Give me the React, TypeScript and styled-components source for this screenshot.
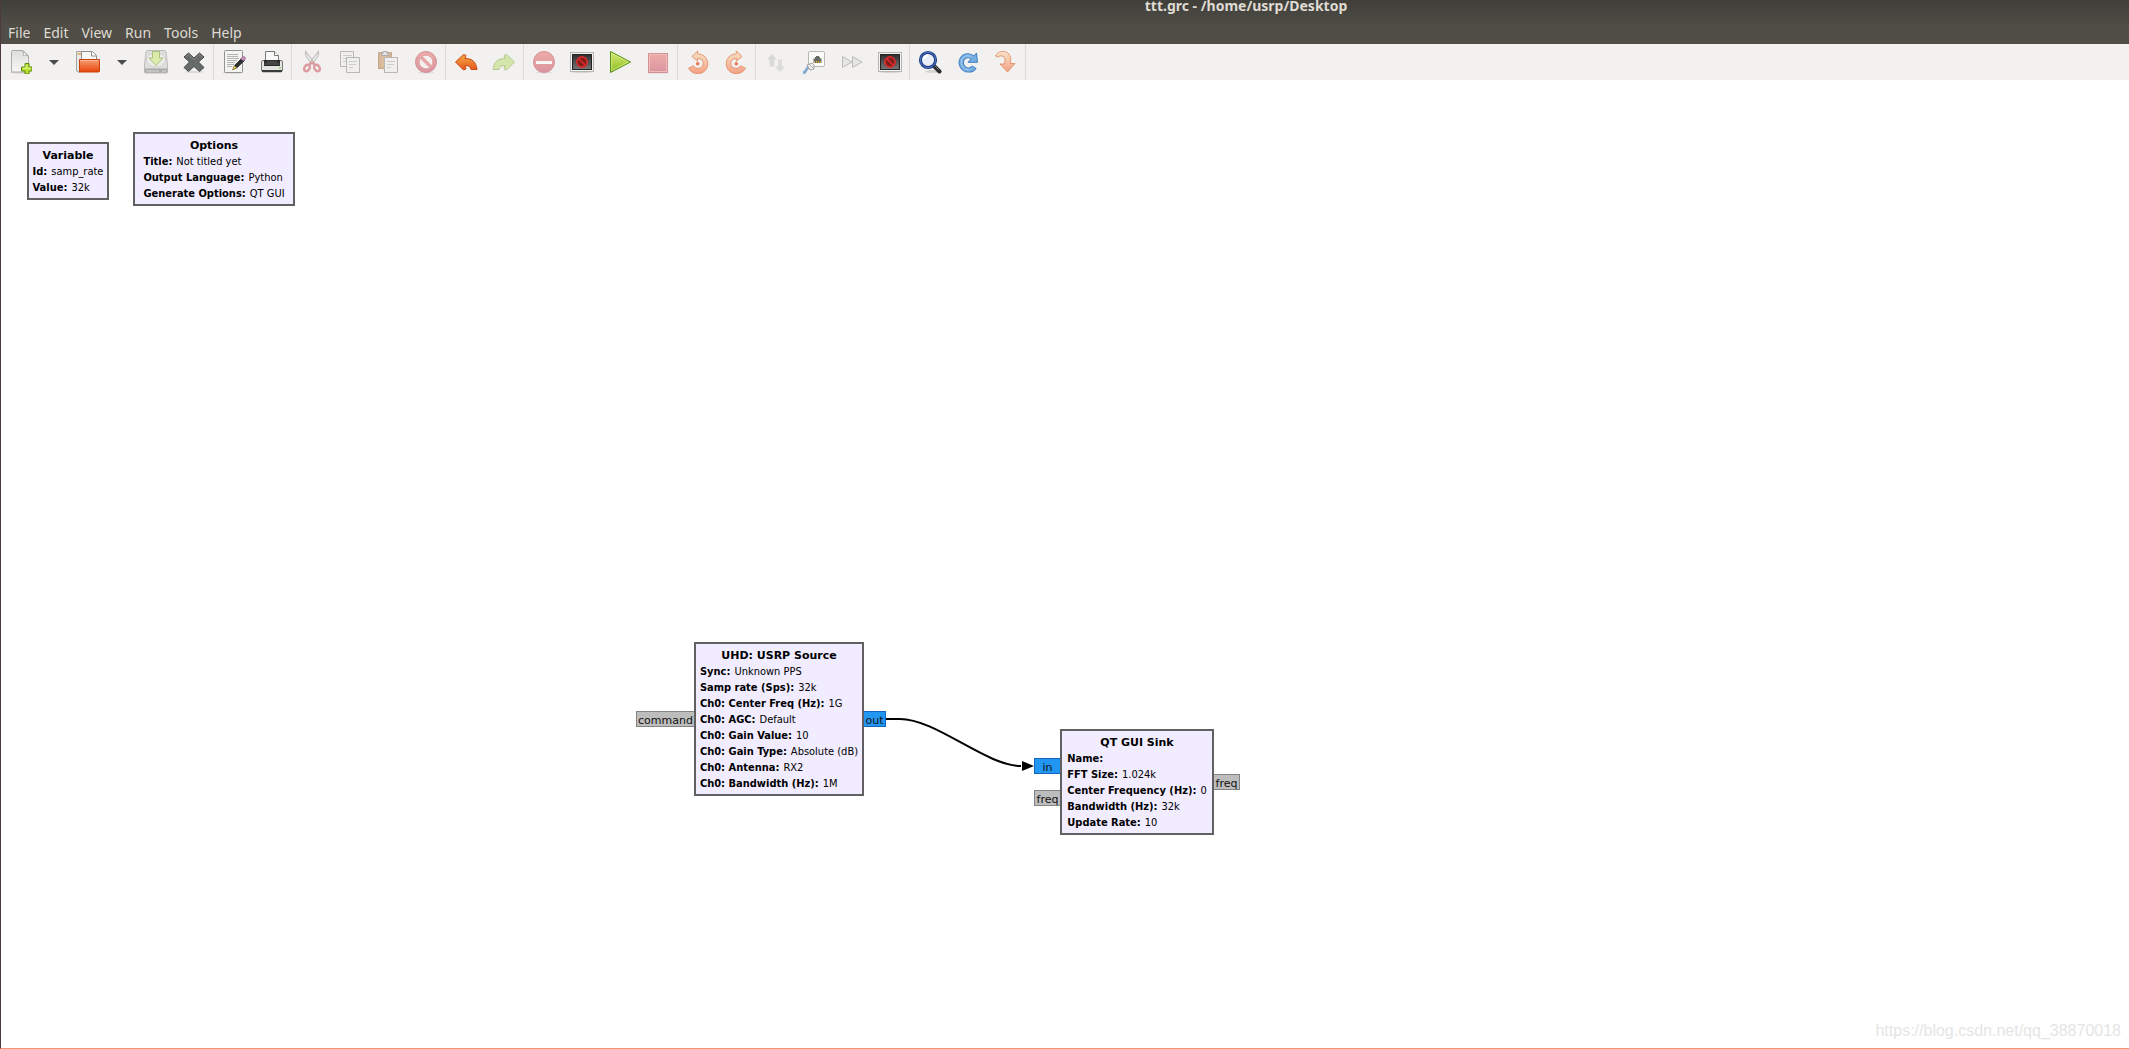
import React from "react";
import styled, { createGlobalStyle } from "styled-components";

const GlobalStyle = createGlobalStyle`
  * { box-sizing: border-box; }
  body { margin: 0; background: #ffffff; }
`;

const Window = styled.div`
  display: flex;
  flex-direction: column;
  min-height: 100vh;
  border-left: 1px solid #4b3a40;
  border-bottom: 1px solid #f7946d;
  font-family: "DejaVu Sans", sans-serif;
`;

const Header = styled.header`
  display: flex;
  flex-direction: column;
  background: linear-gradient(#3f3e39 0, #504d46 26px);
  color: #dfdbd2;
  font-family: "Noto Sans", sans-serif;
  font-size: 14px;
`;

const Title = styled.h1`
  margin: 0;
  padding-left: 362px;
  font-size: 14px;
  font-weight: 700;
  line-height: 12px;
  text-align: center;
`;

const MenuBar = styled.nav`
  display: flex;
  align-items: flex-end;
  gap: 1px;
  height: 32px;
  padding: 0 0 1px 1px;
`;

const MenuItem = styled.button`
  padding: 0 6px;
  border: 0;
  background: none;
  color: inherit;
  font: inherit;
  line-height: 20px;
`;

const Toolbar = styled.div`
  display: flex;
  height: 36px;
  background: #f2f1f0;
`;

const ToolGroup = styled.div`
  display: flex;
  border-right: 1px solid #dcdad8;
  margin-right: 1px;
`;

const ToolButton = styled.button<{ $narrow?: boolean }>`
  display: flex;
  align-items: center;
  justify-content: center;
  width: ${(p) => (p.$narrow ? 30 : 38)}px;
  padding: 0;
  border: 0;
  background: none;
`;

const Icon = styled.svg<{ $faded?: boolean }>`
  display: block;
  width: 24px;
  height: 24px;
  opacity: ${(p) => (p.$faded ? 0.5 : 1)};
`;

const Canvas = styled.main`
  position: relative;
  flex: 1;
  background: #ffffff;
`;

const Wire = styled.svg`
  position: absolute;
  left: 0;
  top: 0;
  width: 100%;
  height: 100%;
`;

const Block = styled.section<{ $x: number; $y: number; $w: number }>`
  position: absolute;
  left: ${(p) => p.$x}px;
  top: ${(p) => p.$y}px;
  width: ${(p) => p.$w}px;
  display: flex;
  flex-direction: column;
  align-items: center;
  padding: 4px 0 2px;
  border: 2px solid #616161;
  background: #f1ecff;
  color: #000000;
  line-height: 16px;
  white-space: nowrap;
`;

const BlockTitle = styled.h2`
  margin: 0;
  font-size: 11px;
  font-weight: 700;
`;

const Params = styled.dl`
  margin: 0;
  font-family: "DejaVu Sans Condensed", "DejaVu Sans", sans-serif;
  font-size: 11px;
`;

const Param = styled.div`
  display: flex;
  gap: 4px;
  dt { font-weight: 700; }
  dd { margin: 0; }
`;

const Port = styled.div<{ $x: number; $y: number; $w: number; $blue?: boolean }>`
  position: absolute;
  left: ${(p) => p.$x}px;
  top: ${(p) => p.$y}px;
  width: ${(p) => p.$w}px;
  height: 16px;
  padding-top: 2px;
  border: 1px solid ${(p) => (p.$blue ? "#1565c0" : "#848484")};
  background: ${(p) => (p.$blue ? "#2196f3" : "#bdbdbd")};
  color: #111111;
  font-size: 11px;
  line-height: 14px;
  text-align: center;
  white-space: nowrap;
`;

const Watermark = styled.a`
  position: absolute;
  right: 8px;
  bottom: 7px;
  color: #e5e5e5;
  font-family: "Liberation Sans", Arial, sans-serif;
  font-size: 16px;
  line-height: 20px;
  text-decoration: none;
`;

const Gradient = ({ id, from, to }: { id: string; from: string; to: string }) => (
  <linearGradient id={id} x1="0" y1="0" x2="0" y2="1">
    <stop offset="0" stopColor={from} />
    <stop offset="1" stopColor={to} />
  </linearGradient>
);

const art: Record<string, React.ReactNode> = {
  new: (
    <>
      <ellipse cx="12" cy="22.5" rx="10" ry="1" fill="#000" opacity=".12" />
      <path d="M3.5 1.5a1 1 0 0 1 1-1H15l5.500 5.500v15a1 1 0 0 1-1 1h-15a1 1 0 0 1-1-1z" fill="url(#g-page)" stroke="#a9aba6" />
      <path d="M14.5.8c1.5 1.7 1 3.5.7 4.7 1.8-.5 3.8-.3 5 .5z" fill="#fff" stroke="#9a9c98" strokeWidth=".7" />
      <path d="M17 13.500h4V17h3v4h-3v3h-4v-3h-3.500v-4H17z" fill="#b9e02c" stroke="#5c8a10" />
      <path d="M18.200 15v3.200H15m3.500 0h4" stroke="#e4f6a0" fill="none" />
    </>
  ),
  open: (
    <>
      <path d="M.5 3.500V21l3 1.500 3-14V1.500h-6z" fill="#e9e9e8" stroke="#a3a3a1" />
      <path d="M1.500 4h4" stroke="#e39b3a" strokeWidth="1.300" />
      <path d="M5.500 11V1.500h11l4 4V11z" fill="#f7f7f6" stroke="#8e8e8c" />
      <path d="M15.500 1.500v4.500h5" fill="#fff" stroke="#8e8e8c" />
      <path d="M3.500 9.500h20V21a1 1 0 0 1-1 1h-19z" fill="url(#g-folder)" stroke="#c9430f" />
      <path d="M4.500 10.500h18" stroke="#f9b795" />
    </>
  ),
  save: (
    <>
      <path d="M4 .5h16a2 2 0 0 1 2 1.500L23.500 15v7a1 1 0 0 1-1 1h-21a1 1 0 0 1-1-1v-7L2 2A2 2 0 0 1 4 .5z" fill="#dededc" stroke="#bcbcba" />
      <ellipse cx="12" cy="10" rx="9.500" ry="7" fill="#ececeb" stroke="#d2d2d0" />
      <path d="M.8 18.500h22.400V22a1 1 0 0 1-1 .8H1.800a1 1 0 0 1-1-.8z" fill="#aaaaa8" />
      <path d="M2 21h13M18 21h4" stroke="#dcdcda" />
      <path d="M8.500 1.500h7V8H19l-7 7.500L5 8h3.500z" fill="#dcebab" stroke="#a9c277" />
    </>
  ),
  close: (
    <>
      <ellipse cx="12" cy="22" rx="9" ry="1" fill="#000" opacity=".1" />
      <path d="M6.500 3 12 8l5.500-5L22 7l-5.500 5 5.500 5.500-4.500 4L12 16.500l-5.500 5-4.500-4L7.500 12 2 7z" fill="#666a68" stroke="#464948" strokeLinejoin="round" />
      <path d="M3.800 7 6.600 4.600 12 9.500l5.400-4.900L20.300 7" fill="none" stroke="#8a8d8b" strokeWidth=".8" />
    </>
  ),
  edit: (
    <>
      <ellipse cx="11" cy="22.500" rx="10" ry="1" fill="#000" opacity=".15" />
      <rect x="2.500" y=".5" width="18" height="22" rx="1" fill="#f3f3f2" stroke="#929490" />
      <path d="M5 4.500h11M5 6.500h11M5 8.500h12M5 10.500h10M5 12.500h8M5 14.500h7M5 16.500h5" stroke="#b4b5b2" />
      <path d="M11 19.500 13 15l7-7 2.500 2.500-7.200 7z" fill="#2f3032" stroke="#181818" strokeWidth=".7" />
      <path d="m10.500 19.800 1.600-4.200 2.700 2.500z" fill="#efd45c" stroke="#796620" strokeWidth=".5" />
      <path d="m18.700 8.500 2-1.800c1.500-1 3.500.9 2.600 2.400l-2 2z" fill="#c990bd" stroke="#86617f" strokeWidth=".6" />
    </>
  ),
  print: (
    <>
      <path d="M5.500 14V1.500h9l4 4V14z" fill="#f8f8f8" stroke="#777977" />
      <path d="M14.500 1.500v4h4" fill="#fff" stroke="#777977" />
      <rect x="1.500" y="10.500" width="21" height="11" rx="1.500" fill="#e3e3e1" stroke="#777977" />
      <rect x="4" y="10" width="16" height="6" fill="#292b2b" />
      <path d="M4.500 14h15M7 12h10" stroke="#606262" />
      <path d="M2 20h20v1.200a1 1 0 0 1-1 1H3a1 1 0 0 1-1-1z" fill="#393b3a" />
      <circle cx="20" cy="18" r=".8" fill="#60c642" />
    </>
  ),
  cut: (
    <>
      <path d="M5.500 1.500c-.5 3.500.5 5.500 6 12l2-1.500zM18.500 1.500c.5 3.500-.5 5.500-6 12l-2-1.500z" fill="#f0f0ef" stroke="#8b8d89" strokeWidth="1.100" />
      <path d="m12 12 3 3M12 12l-3 3" stroke="#c94c54" strokeWidth="2.500" />
      <ellipse cx="7" cy="18" rx="2.500" ry="3.500" transform="rotate(32 7 18)" fill="none" stroke="#ce4a52" strokeWidth="2.500" />
      <ellipse cx="17" cy="18" rx="2.500" ry="3.500" transform="rotate(-32 17 18)" fill="none" stroke="#ce4a52" strokeWidth="2.500" />
    </>
  ),
  copy: (
    <>
      <path d="M2.500 1.500h13v15h-13z" fill="#efefee" stroke="#7e807c" />
      <path d="M5 5.500h9M5 8.500h5M5 11.500h3" stroke="#aaaca8" />
      <path d="M8.500 7.500h13v15h-13z" fill="#efefee" stroke="#7e807c" />
      <path d="M11 11.500h8M11 14.500h7M11 17.500h4" stroke="#aaaca8" />
    </>
  ),
  paste: (
    <>
      <rect x="2.500" y="2.500" width="13" height="16" fill="#b97c3c" stroke="#98632c" />
      <path d="M4.500 4.500h9v12h-9z" fill="#c18b51" />
      <path d="M5.500 5.500v-2H7V1.500h4v2h1.500v2z" fill="#d7d7d5" stroke="#666865" />
      <path d="M8.500 7.500h13v15h-13z" fill="#efefee" stroke="#7e807c" />
      <path d="M11 11.500h8M11 14.500h7M11 17.500h4" stroke="#aaaca8" />
    </>
  ),
  delete: (
    <>
      <ellipse cx="12" cy="22.500" rx="8" ry="1" fill="#000" opacity=".15" />
      <circle cx="12" cy="12" r="10.500" fill="url(#g-red)" stroke="#b5363e" />
      <circle cx="12" cy="12" r="6.800" fill="#f9eeee" stroke="#bd4751" strokeWidth=".7" />
      <path d="m7 7 10 10" stroke="#d95d61" strokeWidth="3.200" />
    </>
  ),
  undo: (
    <path d="M1.500 12 9.500 4.500 12 5.500 11 8.500c7 0 11 3 12 11h-6c-.7-3-2.500-4-6-4l1 3.500-2.500 1z" fill="url(#g-undo)" stroke="#c9490f" strokeLinejoin="round" />
  ),
  redo: (
    <path d="M22.500 12 14.500 4.500 12 5.500 13 8.500C6 8.500 2 11.500 1 19.500h6c.7-3 2.500-4 6-4L12 19l2.500 1z" fill="#b9dc6a" stroke="#73a032" strokeLinejoin="round" />
  ),
  error: (
    <>
      <ellipse cx="12" cy="22.500" rx="8" ry="1" fill="#000" opacity=".15" />
      <circle cx="12" cy="12" r="10.500" fill="url(#g-red)" stroke="#b5363e" />
      <path d="M4 11h16v3H4z" fill="#fff" />
    </>
  ),
  screen: (
    <>
      <ellipse cx="12" cy="22" rx="10" ry="1" fill="#000" opacity=".12" />
      <rect x=".5" y="2.500" width="23" height="19" fill="#f4f4f3" stroke="#b5b5b3" />
      <rect x="2.500" y="4.500" width="19" height="15" fill="url(#g-screen)" stroke="#222" />
      <circle cx="12" cy="12" r="5" fill="#7e1c1c" stroke="#d52a2a" strokeWidth="1.800" />
      <path d="M8.800 8.800l6.400 6.400" stroke="#d52a2a" strokeWidth="1.800" />
    </>
  ),
  play: (
    <>
      <path d="M2.500 1.500v21L22.500 12z" fill="url(#g-play)" stroke="#56901b" strokeLinejoin="round" />
      <path d="M3.700 3.500v17L20.300 12z" fill="none" stroke="#d8ee8d" strokeWidth=".7" />
    </>
  ),
  stop: (
    <>
      <path d="M3 23.200h18" stroke="#000" opacity=".15" />
      <rect x="2.500" y="3.500" width="19" height="19" fill="url(#g-red)" stroke="#b8343c" />
      <rect x="3.500" y="4.500" width="17" height="17" fill="none" stroke="#ef8a80" />
    </>
  ),
  rotate: (
    <>
      <path
        d="M11.700.8 6 6.500l5.700 4.700V8.500c3.500 0 5.500 1.800 5.500 4.800 0 3-2.300 5-5 5-2 0-3.700-.9-4.700-2.600L2.500 18.200c1.700 3.600 5.200 5.400 9.300 5.400 5.700 0 10-4.300 10-9.900 0-5.400-4-9.700-10.100-9.700z"
        fill="url(#g-rotate)"
        stroke="#e0875c"
        strokeWidth=".8"
      />
      <circle cx="11.700" cy="13.700" r="1.800" fill="#e57a56" />
    </>
  ),
  swap: (
    <>
      <path d="M7.700 4 13 9.500h-3v7H5.500v-7H3z" fill="#c2c3bd" />
      <path d="m16 22-5-5.500h3V9.500h4v7h3z" fill="#c8c9c3" />
    </>
  ),
  plug: (
    <>
      <rect x="6.500" y="1.500" width="16" height="15" rx="1.500" fill="#fbfbfa" stroke="#b9bab6" />
      <path d="M11.500 13V8.500H13V7h1V6h3v1h1v1.500h1.500V13z" fill="#686a66" />
      <path d="M12 12h7" stroke="#c9a637" strokeWidth="2" strokeDasharray="1 1" />
      <path d="M1 23c4-1 2-4 6-6" fill="none" stroke="#88aad3" strokeWidth="3" />
      <path d="m5 15 5-2 2 2v4l-4 1z" fill="#f1f1f0" stroke="#8f918d" strokeWidth=".8" />
      <path d="m7 14 4 4" stroke="#a7a8a5" />
    </>
  ),
  forward: (
    <path d="M2.500 6.500v11L12 12zM12.500 6.500v11L22 12z" fill="#d9dad6" stroke="#868884" strokeLinejoin="round" />
  ),
  search: (
    <>
      <ellipse cx="15" cy="21.500" rx="8" ry="1.500" fill="#000" opacity=".12" />
      <path d="m15.500 15.500 6 6" stroke="#292b2d" strokeWidth="4" strokeLinecap="round" />
      <path d="m16.500 15.500 4.500 4.500" stroke="#777a7d" strokeWidth="1" />
      <circle cx="10" cy="10" r="7.600" fill="#e9eef6" stroke="#1e3c86" strokeWidth="3" />
      <circle cx="10" cy="10" r="7.700" fill="none" stroke="#5378c2" strokeWidth="1" />
      <path d="M6 9a4 4 0 0 1 4-3.500" fill="none" stroke="#fff" strokeWidth="2" />
    </>
  ),
  reload: (
    <>
      <path d="M16.500 7.500C14 5 9 5 6.500 8.500c-3 4-.5 11.500 6 11.500 2.500 0 4.700-1 6-3" fill="none" stroke="#397dc1" strokeWidth="5.200" />
      <path d="m20.500 3 .9 9.300H12L16 8z" fill="#77aee2" stroke="#397dc1" strokeLinejoin="round" />
      <path d="M17.500 8.500C14 4.500 9 5 6.500 8.500c-3 4-.5 11.500 6 11.500 2.300 0 4.300-.9 5.500-2.500" fill="none" stroke="#77aee2" strokeWidth="3.400" />
      <path d="M15.500 7C12.500 5 8.500 5.500 6.200 8.700c-2.500 4 0 10.500 6.300 11" fill="none" stroke="#a9cdf0" strokeWidth="1" />
    </>
  ),
  jump: (
    <path d="M1.500 6C3.500 2 7 1 10.500 1.500c5 1 7 5.500 6 12H21L13.500 22 6 14h4.500c1-4.500.5-7.500-2.500-8-1.500-.3-2.500 0-3.500 1z" fill="url(#g-rotate)" stroke="#e0875c" strokeWidth=".8" strokeLinejoin="round" />
  ),
  arrow: <path d="M7 10h10l-5 5z" fill="#4c4c4c" />,
};

type Tool = { label: string; icon: string; faded?: boolean; flip?: boolean };

const toolGroups: Tool[][] = [
  [
    { label: "New", icon: "new" },
    { label: "New flow graph types", icon: "arrow" },
    { label: "Open", icon: "open" },
    { label: "Recent files", icon: "arrow" },
    { label: "Save", icon: "save" },
    { label: "Close", icon: "close" },
  ],
  [
    { label: "Screen capture", icon: "edit" },
    { label: "Print", icon: "print" },
  ],
  [
    { label: "Cut", icon: "cut", faded: true },
    { label: "Copy", icon: "copy", faded: true },
    { label: "Paste", icon: "paste", faded: true },
    { label: "Delete", icon: "delete", faded: true },
  ],
  [
    { label: "Undo", icon: "undo" },
    { label: "Redo", icon: "redo", faded: true },
  ],
  [
    { label: "Errors", icon: "error", faded: true },
    { label: "Generate", icon: "screen" },
    { label: "Execute", icon: "play" },
    { label: "Kill", icon: "stop", faded: true },
  ],
  [
    { label: "Rotate counterclockwise", icon: "rotate" },
    { label: "Rotate clockwise", icon: "rotate", flip: true },
  ],
  [
    { label: "Enable", icon: "swap", faded: true },
    { label: "Disable", icon: "plug" },
    { label: "Bypass", icon: "forward", faded: true },
    { label: "Hide disabled blocks", icon: "screen" },
  ],
  [
    { label: "Find blocks", icon: "search" },
    { label: "Reload blocks", icon: "reload" },
    { label: "Open hierarchical block", icon: "jump" },
  ],
];

const blocks = [
  { x: 26, y: 62, w: 82, title: "Variable", params: [["Id", "samp_rate"], ["Value", "32k"]] },
  {
    x: 132, y: 52, w: 162, title: "Options",
    params: [["Title", "Not titled yet"], ["Output Language", "Python"], ["Generate Options", "QT GUI"]],
  },
  {
    x: 693, y: 562, w: 170, title: "UHD: USRP Source",
    params: [
      ["Sync", "Unknown PPS"],
      ["Samp rate (Sps)", "32k"],
      ["Ch0: Center Freq (Hz)", "1G"],
      ["Ch0: AGC", "Default"],
      ["Ch0: Gain Value", "10"],
      ["Ch0: Gain Type", "Absolute (dB)"],
      ["Ch0: Antenna", "RX2"],
      ["Ch0: Bandwidth (Hz)", "1M"],
    ],
  },
  {
    x: 1059, y: 649, w: 154, title: "QT GUI Sink",
    params: [
      ["Name", ""],
      ["FFT Size", "1.024k"],
      ["Center Frequency (Hz)", "0"],
      ["Bandwidth (Hz)", "32k"],
      ["Update Rate", "10"],
    ],
  },
];

const ports = [
  { x: 635, y: 631, w: 59, label: "command" },
  { x: 862, y: 631, w: 23, label: "out", blue: true },
  { x: 1033, y: 678, w: 27, label: "in", blue: true },
  { x: 1033, y: 710, w: 27, label: "freq" },
  { x: 1212, y: 694, w: 27, label: "freq" },
];

export default function App() {
  return (
    <Window>
      <GlobalStyle />
      <Header>
        <Title>ttt.grc - /home/usrp/Desktop</Title>
        <MenuBar>
          {["File", "Edit", "View", "Run", "Tools", "Help"].map((m) => (
            <MenuItem key={m}>{m}</MenuItem>
          ))}
        </MenuBar>
      </Header>
      <Toolbar role="toolbar" aria-label="Main toolbar">
        {toolGroups.map((group, i) => (
          <ToolGroup key={i}>
            {group.map((t) => (
              <ToolButton key={t.label} aria-label={t.label} $narrow={t.icon === "arrow"}>
                <Icon viewBox="0 0 24 24" $faded={t.faded} aria-hidden="true">
                  {t.icon === "new" && (
                    <defs>
                      <Gradient id="g-page" from="#dededd" to="#f7f7f6" />
                      <Gradient id="g-folder" from="#f6a071" to="#e8430c" />
                      <Gradient id="g-screen" from="#2e2e2e" to="#777777" />
                      <Gradient id="g-red" from="#e96a5e" to="#c73a56" />
                      <Gradient id="g-undo" from="#f5a947" to="#e8571f" />
                      <Gradient id="g-play" from="#d6ec74" to="#8dbb1e" />
                      <Gradient id="g-rotate" from="#f7e3c9" to="#f5a183" />
                    </defs>
                  )}
                  <g transform={t.flip ? "translate(24 0) scale(-1 1)" : undefined}>{art[t.icon]}</g>
                </Icon>
              </ToolButton>
            ))}
          </ToolGroup>
        ))}
      </Toolbar>
      <Canvas>
        <Wire aria-hidden="true">
          <path d="M885 639H899C935 639 985 686 1020 686" fill="none" stroke="#000" strokeWidth="2" />
          <path d="M1021 681v10l12-5z" fill="#000" />
        </Wire>
        {ports.map((p, i) => (
          <Port key={i} $x={p.x} $y={p.y} $w={p.w} $blue={p.blue}>
            {p.label}
          </Port>
        ))}
        {blocks.map((b) => (
          <Block key={b.title} $x={b.x} $y={b.y} $w={b.w}>
            <BlockTitle>{b.title}</BlockTitle>
            <Params>
              {b.params.map(([name, value]) => (
                <Param key={name}>
                  <dt>{name}:</dt>
                  <dd>{value}</dd>
                </Param>
              ))}
            </Params>
          </Block>
        ))}
        <Watermark href="https://blog.csdn.net/qq_38870018">https://blog.csdn.net/qq_38870018</Watermark>
      </Canvas>
    </Window>
  );
}
